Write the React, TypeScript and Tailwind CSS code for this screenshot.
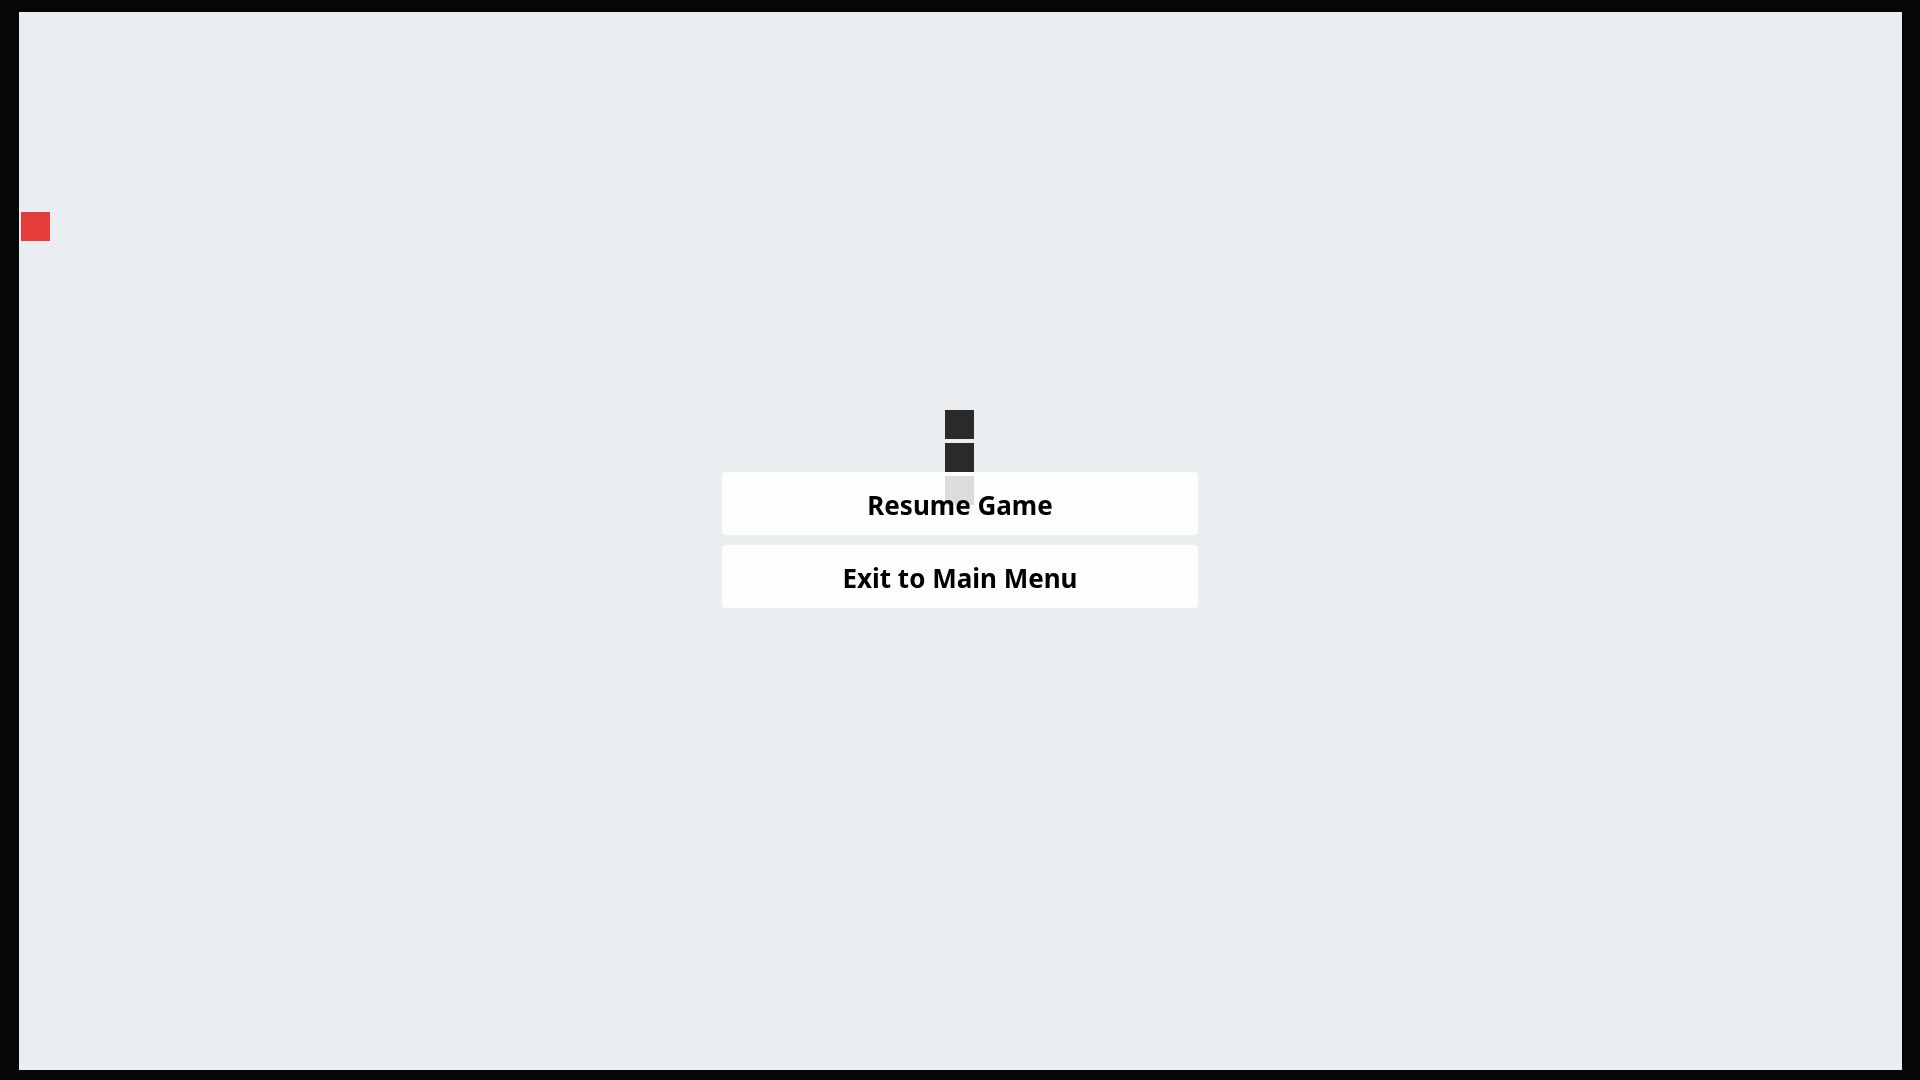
const CELL = 33;

const snake = [
    { x: 28, y: 12 },
    { x: 28, y: 13 },
    { x: 28, y: 14 },
];
const food = { x: 0, y: 6 };

function Cell({ x, y, className }: { x: number; y: number; className: string }) {
    return <div className={`absolute w-[29px] h-[29px] ${className}`} style={{ left: x * CELL + 2, top: y * CELL + 2 }} />
}

export default function App() {
    return <div className="w-screen h-screen bg-[#060606] pt-[12px] pl-[19px] pr-[18px] pb-[10px] font-['Noto_Sans','Open_Sans',sans-serif]">
        <div className="relative w-full h-full bg-[#eaeef1] overflow-hidden">
            <Cell x={food.x} y={food.y} className="bg-[#e53d39]" />
            {snake.map((s, i) => <Cell key={i} x={s.x} y={s.y} className="bg-[#2a2a2a]" />)}
        </div>

        <div className="fixed inset-0 flex flex-col items-center justify-center gap-[10px]">
            <button className="w-[476px] h-[63px] pt-[2px] rounded-[4px] bg-white/[0.84] text-black font-bold text-[26px] leading-none">
                Resume Game
            </button>
            <button className="w-[476px] h-[63px] pt-[2px] rounded-[4px] bg-white/[0.84] text-black font-bold text-[26px] leading-none">
                Exit to Main Menu
            </button>
        </div>
    </div>
}
